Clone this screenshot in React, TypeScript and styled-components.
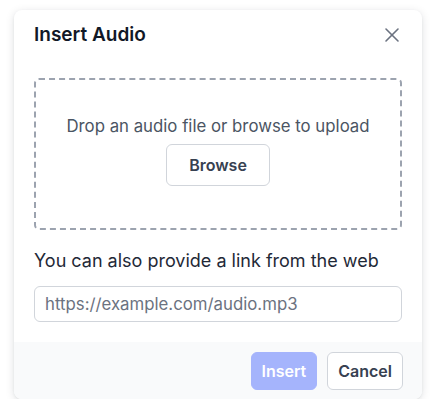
import React from 'react';
import styled, { createGlobalStyle } from 'styled-components';
import { X } from 'lucide-react';

const GlobalStyle = createGlobalStyle`
  body {
    margin: 0;
    background: #ffffff;
    font-family: Inter, "Noto Sans", sans-serif;
  }
`;

const Page = styled.div`
  padding: 10px 11px 0 14px;
`;

const Dialog = styled.div`
  width: 408px;
  background: #ffffff;
  border-radius: 8px;
  box-shadow: 0 2px 10px rgba(17, 24, 39, 0.12), 0 1px 3px rgba(17, 24, 39, 0.06);
  overflow: hidden;
`;

const Header = styled.div`
  display: flex;
  align-items: center;
  justify-content: space-between;
  padding: 11px 18px 0 20px;
`;

const Title = styled.h2`
  margin: 0;
  font-size: 19px;
  line-height: 28px;
  font-weight: 600;
  color: #111827;
`;

const CloseButton = styled.button`
  display: flex;
  padding: 0;
  border: none;
  background: none;
  color: #6b7280;
  cursor: pointer;
`;

const Body = styled.div`
  padding: 29px 20px 20px;
`;

const DropZone = styled.div`
  display: flex;
  flex-direction: column;
  align-items: center;
  padding: 34px 20px 42px;
  border: 2px dashed #9ca3af;
  border-radius: 5px;
`;

const DropText = styled.p`
  margin: 0 0 6px;
  font-size: 16.8px;
  line-height: 24px;
  color: #4b5563;
`;

const Button = styled.button<{ $primary?: boolean; $height?: number }>`
  height: ${(p) => p.$height ?? 38}px;
  padding: 0 ${(p) => (p.$height ? 22 : 10)}px;
  border-radius: 6px;
  border: 1px solid ${(p) => (p.$primary ? '#a5b4fc' : '#d1d5db')};
  background: ${(p) => (p.$primary ? '#a5b4fc' : '#ffffff')};
  color: ${(p) => (p.$primary ? '#ffffff' : '#374151')};
  font-family: inherit;
  font-size: 16px;
  font-weight: 600;
  cursor: pointer;
`;

const Label = styled.label`
  display: block;
  margin: 17px 0 11px;
  font-size: 18px;
  line-height: 28px;
  color: #1f2937;
`;

const UrlInput = styled.input`
  display: block;
  box-sizing: border-box;
  width: 100%;
  height: 36px;
  padding: 0 10px;
  border: 1px solid #d1d5db;
  border-radius: 6px;
  font-family: inherit;
  font-size: 16.8px;
  color: #111827;
  outline: none;
  &::placeholder {
    color: #6b7280;
  }
`;

const Footer = styled.div`
  display: flex;
  justify-content: flex-end;
  gap: 10px;
  padding: 10px 19px 9px 20px;
  background: #f9fafb;
`;

export default function App() {
  return (
    <>
      <GlobalStyle />
      <Page>
        <Dialog role="dialog">
          <Header>
            <Title>Insert Audio</Title>
            <CloseButton aria-label="Close">
              <X size={24} strokeWidth={1.6} />
            </CloseButton>
          </Header>
          <Body>
            <DropZone>
              <DropText>Drop an audio file or browse to upload</DropText>
              <Button $height={42}>Browse</Button>
            </DropZone>
            <Label htmlFor="audio-url">You can also provide a link from the web</Label>
            <UrlInput id="audio-url" placeholder="https://example.com/audio.mp3" />
          </Body>
          <Footer>
            <Button $primary disabled>Insert</Button>
            <Button>Cancel</Button>
          </Footer>
        </Dialog>
      </Page>
    </>
  );
}
